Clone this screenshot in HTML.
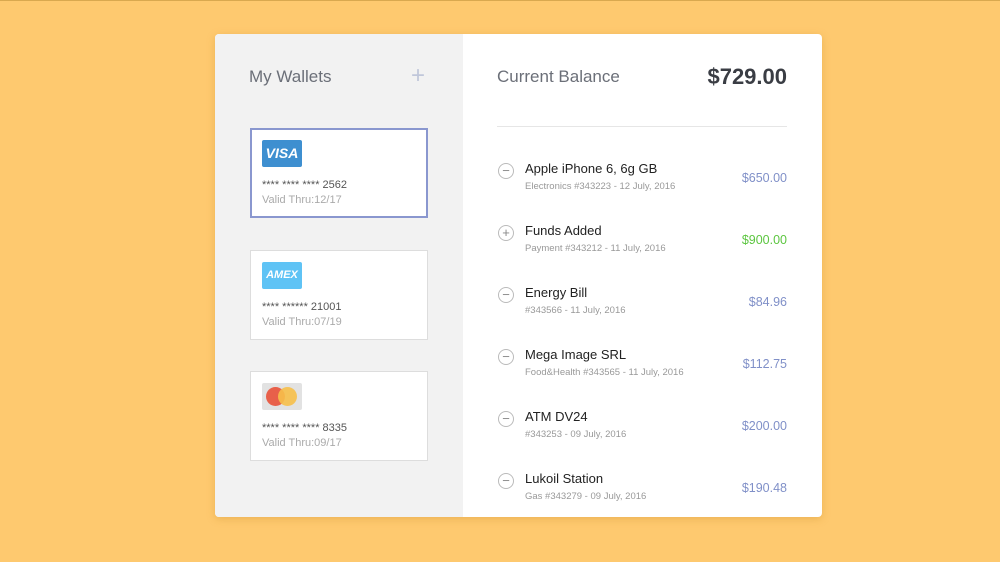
<!DOCTYPE html><html><head><style>
body{margin:0;width:1000px;height:562px;background:#fec96f;font-family:"Liberation Sans",sans-serif;position:relative;overflow:hidden}
.top{position:absolute;left:0;top:0;width:1000px;height:1px;background:#d9a84f}
.panel{position:absolute;left:215px;top:34px;width:607px;height:483px;border-radius:4px;background:#fff;box-shadow:0 2px 8px rgba(200,140,40,.35);overflow:hidden}
.left{position:absolute;left:0;top:0;width:248px;height:483px;background:#f2f2f2}
.a{position:absolute}
.card{position:absolute;left:35px;width:176px;background:#fff;border:1px solid #ddd}
.card .n{position:absolute;left:11px;top:50px;font-size:11px;color:#555}
.card .v{position:absolute;left:11px;top:65px;font-size:11px;color:#aaa}
.logo{position:absolute;left:11px;top:11px;width:40px;height:27px;border-radius:2px}
.row{position:absolute;left:282px;width:290px}
.row .t{position:absolute;left:28px;top:1px;font-size:13px;color:#222}
.row .s{position:absolute;left:28px;top:21px;font-size:9.5px;color:#999}
.row .m{position:absolute;right:0;top:11px;font-size:12.5px;color:#8090c8}
.row .c{position:absolute;left:1px;top:3px;width:14px;height:14px;border:1px solid #bbb;border-radius:50%;color:#888;font-size:13px;line-height:13px;text-align:center}
</style></head><body><div class="top"></div>
<div class="panel">
<div class="left">
<div class="a" style="left:34px;top:33px;font-size:17px;color:#6b6f78">My Wallets</div>
<div class="a" style="left:196px;top:28px;font-size:24px;color:#c0c7da;font-weight:300">+</div>
<div class="card" style="top:94px;width:174px;height:86px;border:2px solid #8a97cf">
<div class="logo" style="left:10px;top:10px;background:#3e8fd0;color:#fff;font-weight:bold;font-style:italic;font-size:14px;line-height:27px;text-align:center">VISA</div>
<div class="n" style="left:10px;top:49px">**** **** **** 2562</div><div class="v" style="left:10px;top:64px">Valid Thru:12/17</div></div>
<div class="card" style="top:216px;height:88px">
<div class="logo" style="background:#5fc3f5;color:#fff;font-weight:bold;font-style:italic;font-size:11px;line-height:27px;text-align:center">AMEX</div>
<div class="n">**** ****** 21001</div><div class="v">Valid Thru:07/19</div></div>
<div class="card" style="top:337px;height:88px">
<div class="logo" style="background:#e2e2e2"><div class="a" style="left:4px;top:4px;width:19px;height:19px;border-radius:50%;background:#e8604a"></div><div class="a" style="left:16px;top:4px;width:19px;height:19px;border-radius:50%;background:#f7c04a;opacity:.9"></div></div>
<div class="n">**** **** **** 8335</div><div class="v">Valid Thru:09/17</div></div>
</div>
<div class="a" style="left:282px;top:33px;font-size:17px;color:#6b6f78">Current Balance</div>
<div class="a" style="right:35px;top:30px;font-size:22px;color:#3a3d44;font-weight:bold">$729.00</div>
<div class="a" style="left:282px;top:92px;width:290px;height:1px;background:#e6e6e6"></div>
<div class="row" style="top:126px"><div class="c">−</div><div class="t">Apple iPhone 6, 6g GB</div><div class="s">Electronics #343223 - 12 July, 2016</div><div class="m">$650.00</div></div>
<div class="row" style="top:188px"><div class="c">+</div><div class="t">Funds Added</div><div class="s">Payment #343212 - 11 July, 2016</div><div class="m" style="color:#5cc640">$900.00</div></div>
<div class="row" style="top:250px"><div class="c">−</div><div class="t">Energy Bill</div><div class="s">#343566 - 11 July, 2016</div><div class="m">$84.96</div></div>
<div class="row" style="top:312px"><div class="c">−</div><div class="t">Mega Image SRL</div><div class="s">Food&amp;Health #343565 - 11 July, 2016</div><div class="m">$112.75</div></div>
<div class="row" style="top:374px"><div class="c">−</div><div class="t">ATM DV24</div><div class="s">#343253 - 09 July, 2016</div><div class="m">$200.00</div></div>
<div class="row" style="top:436px"><div class="c">−</div><div class="t">Lukoil Station</div><div class="s">Gas #343279 - 09 July, 2016</div><div class="m">$190.48</div></div>
</div></body></html>
